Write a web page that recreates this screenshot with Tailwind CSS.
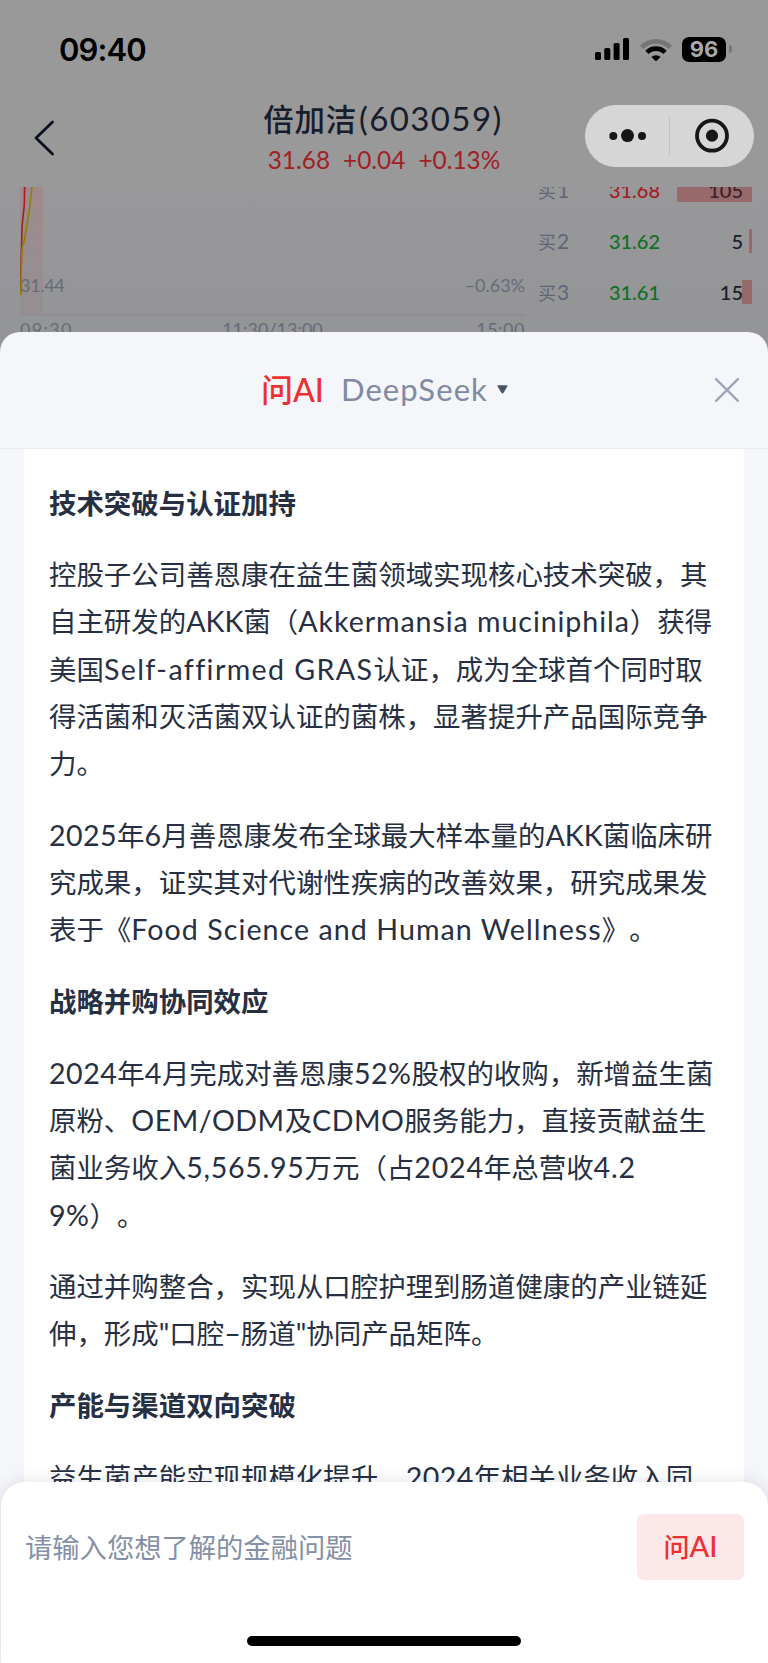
<!doctype html>
<html lang="zh-CN">
<head>
  <meta charset="UTF-8">
  <meta name="viewport" content="width=device-width, initial-scale=1.0">
  <title>倍加洁(603059)</title>
  <script src="https://cdn.jsdelivr.net/npm/@tailwindcss/browser@4"></script>
</head>
<body class="font-['Lato','Noto_Sans_CJK_SC',sans-serif]">
  <div class="relative w-[768px] h-[1663px] overflow-hidden bg-[#979799] flex flex-col">

    <!-- Status bar -->
    <div class="h-[98px] bg-[#999999] flex items-center justify-between pl-[59px] pr-[36px] shrink-0">
      <span class="font-['Inter',sans-serif] font-semibold text-[31px] leading-none tracking-[-0.9px] text-black">09:40</span>
      <div class="flex items-center">
        <svg class="w-[34px] h-[22px]" viewBox="0 0 34 22">
          <rect x="0" y="14" width="6" height="8" rx="1.6"/>
          <rect x="9.3" y="10" width="6" height="12" rx="1.6"/>
          <rect x="18.6" y="5" width="6" height="17" rx="1.6"/>
          <rect x="28" y="0" width="6" height="22" rx="1.6"/>
        </svg>
        <svg class="w-[32px] h-[23px] ml-[11px]" viewBox="0 0 32 23">
          <path d="M0 7.6a22.6 22.6 0 0 1 32 0l-3.3 3.4a18 18 0 0 0-25.4 0z" fill="#767676"/>
          <path d="M5.3 12.8a15.1 15.1 0 0 1 21.4 0l-3.2 3.3a10.6 10.6 0 0 0-15 0z"/>
          <path d="M11.4 19a6.6 6.6 0 0 1 9.2 0L16 23.4z"/>
        </svg>
        <div class="ml-[10px] w-[44px] h-[25px] rounded-[7px] bg-black flex items-center justify-center font-['Inter',sans-serif] font-bold text-[22px] leading-none text-[#a8a8a8]">96</div>
        <div class="ml-[3px] w-[3px] h-[8px] rounded-r-full bg-[#767676]"></div>
      </div>
    </div>

    <!-- Title bar -->
    <div class="h-[89px] bg-[#999999] grid grid-cols-[200px_1fr_200px] shrink-0">
      <div class="pl-[33px] pt-[21px]">
        <svg class="w-[22px] h-[38px]" viewBox="0 0 22 38" fill="none" stroke="#0b1120" stroke-width="2.8" stroke-linecap="round" stroke-linejoin="round">
          <path d="M19.5 3L3 19l16.500 16"/>
        </svg>
      </div>
      <div class="flex flex-col items-center whitespace-nowrap">
        <div class="h-[40px] leading-[40px] text-[30.5px] text-[#171d2b] flex items-center -ml-[2px]">
          <span class="font-['Noto_Sans_CJK_SC'] font-medium tracking-[0.7px]">倍加洁</span><span class="ml-[2px] text-[33px] tracking-[1.4px]">(603059)</span>
        </div>
        <div class="mt-[8px] flex gap-[13px] text-[24.4px] leading-[28px] text-[#a02124]">
          <span>31.68</span><span>+0.04</span><span>+0.13%</span>
        </div>
      </div>
      <div class="pl-[17px] pt-[7px]">
        <div class="w-[169px] h-[62px] rounded-full bg-[#d6d6d6]">
          <svg class="w-[169px] h-[62px]" viewBox="0 0 169 62" fill="#161616">
            <circle cx="28.3" cy="31" r="4"/>
            <circle cx="42.5" cy="30.6" r="6.5"/>
            <circle cx="57" cy="31" r="4"/>
            <path d="M84.5 11.5v39" stroke="#c3c3c3"/>
            <circle cx="127" cy="30.7" r="15" fill="none" stroke="#161616" stroke-width="3.8"/>
            <circle cx="127" cy="30.7" r="6.1"/>
          </svg>
        </div>
      </div>
    </div>

    <!-- Quote chart and order book -->
    <div class="h-[180px] bg-linear-to-b from-[#98989a] to-[#939496] flex shrink-0 overflow-hidden">
      <div class="w-[525px] pl-[20px] text-[18px] leading-[20px] text-[#666b79]">
        <div class="relative h-[129px] border-b-2 border-[#8d8e95]">
          <svg class="absolute left-0 top-0 w-[24px] h-[128px]" viewBox="0 0 24 128" fill="none">
            <defs>
              <linearGradient id="area" x1="0" y1="0" x2="0" y2="1">
                <stop offset="0" stop-color="#9e8a8c"/>
                <stop offset="1" stop-color="#958f92"/>
              </linearGradient>
            </defs>
            <rect width="23" height="128" fill="url(#area)"/>
            <path d="M4.600 0L4.300 18 2.200 38 1.600 56 1 80 .8 105" stroke="#a51d22" stroke-width="1.6"/>
            <path d="M12 0L10 18 6 44 4 55 2.200 60 1.400 78 .8 108" stroke="#8d8000" stroke-width="1.6"/>
          </svg>
          <div class="relative pt-[88px] flex justify-between"><span class="tracking-[-0.3px]">31.44</span><span>−0.63%</span></div>
        </div>
        <div class="mt-[3px] grid grid-cols-3">
          <span class="tracking-[1.3px]">09:30</span><span class="text-center">11:30/13:00</span><span class="text-right tracking-[0.5px]">15:00</span>
        </div>
      </div>
      <div class="w-[243px] pl-[13px] pr-[16px] -mt-[23px] text-[20px] text-[#171d2b]">
        <div class="h-[51px] grid grid-cols-[60px_62px_1fr] items-center">
          <span class="text-[21px] text-[#5f6577]"><span class="text-[18px] mr-px">买</span>1</span>
          <span class="text-right text-[#a51d22] font-medium">31.68</span>
          <div class="ml-[17px] h-[24px] bg-[#97696b] pr-[9px] text-right leading-[24px] text-[#3c2028] font-medium">105</div>
        </div>
        <div class="h-[51px] grid grid-cols-[60px_62px_1fr] items-center">
          <span class="text-[21px] text-[#5f6577]"><span class="text-[18px] mr-px">买</span>2</span>
          <span class="text-right text-[#0f7023] font-medium">31.62</span>
          <div class="h-[24px] flex justify-end leading-[24px] font-medium">5<span class="ml-[6px] w-[3px] h-[24px] bg-[#97696b]"></span></div>
        </div>
        <div class="h-[51px] grid grid-cols-[60px_62px_1fr] items-center">
          <span class="text-[21px] text-[#5f6577]"><span class="text-[18px] mr-px">买</span>3</span>
          <span class="text-right text-[#0f7023] font-medium">31.61</span>
          <div class="h-[24px] flex justify-end leading-[24px] font-medium"><span class="relative z-10">15</span><span class="-ml-px w-[10px] h-[24px] bg-[#97696b]"></span></div>
        </div>
      </div>
    </div>

    <!-- AI sheet -->
    <div class="absolute inset-x-0 top-[332px] bottom-0 rounded-t-[20px] bg-[#f5f6fa] overflow-hidden">
      <div class="h-[117px] border-b border-[#e8ebf1] grid grid-cols-[261px_1fr_54px] items-center text-[31px] leading-[40px]">
        <span></span>
        <div class="flex items-center -mt-[2px]">
          <span class="text-[#ec3034] text-[32px] font-medium"><span class="font-['Noto_Sans_CJK_SC']">问</span>AI</span>
          <span class="ml-[17px] text-[#7f8aa3] tracking-[1.1px]">DeepSeek</span>
          <svg class="ml-[9px] w-[11px] h-[9px]" viewBox="0 0 11 9" fill="#4b5568"><path d="M1.200.3h8.600q1 0 .6 1L6.600 7.800q-1.100 1.400-2.200 0L.5 1.300Q.2.3 1.200.3z"/></svg>
        </div>
        <svg class="w-[26px] h-[26px]" viewBox="0 0 25 25" fill="none" stroke="#9ea6ba" stroke-width="2.3" stroke-linecap="round"><path d="M2 2l21 21M23 2L2 23"/></svg>
      </div>

      <!-- Answer -->
      <div class="mx-[24px] h-[1214px] bg-white pl-[25px] pt-[29.5px] flex flex-col gap-[24.3px] whitespace-nowrap font-['Noto_Sans_CJK_SC',sans-serif] text-[27.45px] leading-[47.3px] text-[#272f42] [text-spacing-trim:space-all]">
        <h3 class="font-bold">技术突破与认证加持</h3>
        <p>
          控股子公司善恩康在益生菌领域实现核心技术突破，其<br>
          自主研发的<span class="font-['Lato'] text-[28.6px] leading-none">AKK</span>菌（<span class="font-['Lato'] text-[28.6px] leading-none tracking-[0.93px]">Akkermansia muciniphila</span>）获得<br>
          美国<span class="font-['Lato'] text-[28.6px] leading-none tracking-[1.4px]">Self-affirmed GRAS</span>认证，成为全球首个同时取<br>
          得活菌和灭活菌双认证的菌株，显著提升产品国际竞争<br>
          力。
        </p>
        <p>
          <span class="font-['Lato'] text-[28.6px] leading-none tracking-[0.4px]">2025</span>年<span class="font-['Lato'] text-[28.6px] leading-none tracking-[0.4px]">6</span>月善恩康发布全球最大样本量的<span class="font-['Lato'] text-[28.6px] leading-none">AKK</span>菌临床研<br>
          究成果，证实其对代谢性疾病的改善效果，研究成果发<br>
          表于《<span class="font-['Lato'] text-[28.6px] leading-none tracking-[1.06px]">Food Science and Human Wellness</span>》。
        </p>
        <h3 class="font-bold">战略并购协同效应</h3>
        <p>
          <span class="font-['Lato'] text-[28.6px] leading-none tracking-[0.5px]">2024</span>年<span class="font-['Lato'] text-[28.6px] leading-none tracking-[0.5px]">4</span>月完成对善恩康<span class="font-['Lato'] text-[28.6px] leading-none tracking-[0.5px]">52%</span>股权的收购，新增益生菌<br>
          原粉、<span class="font-['Lato'] text-[28.6px] leading-none tracking-[0.5px]">OEM/ODM</span>及<span class="font-['Lato'] text-[28.6px] leading-none tracking-[0.5px]">CDMO</span>服务能力，直接贡献益生<br>
          菌业务收入<span class="font-['Lato'] text-[28.6px] leading-none tracking-[0.7px]">5,565.95</span>万元（占<span class="font-['Lato'] text-[28.6px] leading-none tracking-[0.8px]">2024</span>年总营收<span class="font-['Lato'] text-[28.6px] leading-none tracking-[0.8px]">4.2</span><br>
          <span class="font-['Lato'] text-[28.6px] leading-none tracking-[0.5px]">9%</span>）。
        </p>
        <p>
          通过并购整合，实现从口腔护理到肠道健康的产业链延<br>
          伸，形成<span class="font-['Lato'] text-[28.6px] leading-none">"</span>口腔<span class="font-['Lato'] text-[28.6px] leading-none">–</span>肠道<span class="font-['Lato'] text-[28.6px] leading-none">"</span>协同产品矩阵。
        </p>
        <h3 class="font-bold">产能与渠道双向突破</h3>
        <p>益生菌产能实现规模化提升，<span class="font-['Lato'] text-[28.6px] leading-none tracking-[0.4px]">2024</span>年相关业务收入同</p>
      </div>

      <!-- Question input -->
      <div class="absolute left-px right-0 bottom-0 h-[181px] rounded-t-[24px] bg-white shadow-[0_0_16px_rgba(30,40,70,0.14)]">
        <div class="mt-[32px] pl-[24px] pr-[24px] flex items-center justify-between font-['Noto_Sans_CJK_SC',sans-serif]">
          <span class="text-[27.3px] leading-none text-[#8490a7]">请输入您想了解的金融问题</span>
          <button class="w-[107px] h-[66px] pb-[3px] rounded-[7px] bg-[#fce8e8] text-[#ec3034] text-[26px] font-medium">问<span class="font-['Lato'] text-[29px] leading-none">AI</span></button>
        </div>
        <div class="mt-[56px] ml-[246px] w-[274px] h-[10px] rounded-full bg-black"></div>
      </div>
    </div>
  </div>
</body>
</html>
